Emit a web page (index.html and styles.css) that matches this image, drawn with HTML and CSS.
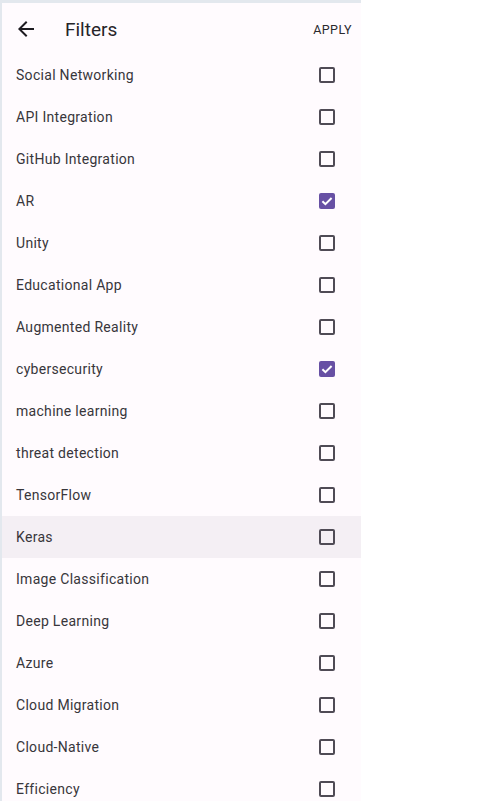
FILE: index.html
```html
<!DOCTYPE html>
<html>
<head>
<meta charset="utf-8">
<link rel="stylesheet" href="styles.css">
</head>
<body>
<div class="panel">
  <header class="bar">
    <span class="back">
      <svg width="24" height="24" viewBox="0 0 24 24"><path d="M20 11H7.83l5.59-5.59L12 4l-8 8 8 8 1.41-1.41L7.83 13H20v-2z" fill="#1d1b20"/></svg>
    </span>
    <span class="title">Filters</span>
    <span class="apply">APPLY</span>
  </header>
  <ul class="list">
    <li class="row"><span class="label">Social Networking</span><span class="box"></span></li>
    <li class="row"><span class="label">API Integration</span><span class="box"></span></li>
    <li class="row"><span class="label">GitHub Integration</span><span class="box"></span></li>
    <li class="row"><span class="label">AR</span><span class="box checked"><svg width="16" height="16" viewBox="0 0 16 16"><path d="M3.4 8.2l3 3L12.6 5" fill="none" stroke="#fff" stroke-width="2"/></svg></span></li>
    <li class="row"><span class="label">Unity</span><span class="box"></span></li>
    <li class="row"><span class="label">Educational App</span><span class="box"></span></li>
    <li class="row"><span class="label">Augmented Reality</span><span class="box"></span></li>
    <li class="row"><span class="label">cybersecurity</span><span class="box checked"><svg width="16" height="16" viewBox="0 0 16 16"><path d="M3.4 8.2l3 3L12.6 5" fill="none" stroke="#fff" stroke-width="2"/></svg></span></li>
    <li class="row"><span class="label">machine learning</span><span class="box"></span></li>
    <li class="row"><span class="label">threat detection</span><span class="box"></span></li>
    <li class="row"><span class="label">TensorFlow</span><span class="box"></span></li>
    <li class="row hover"><span class="label">Keras</span><span class="box"></span></li>
    <li class="row"><span class="label">Image Classification</span><span class="box"></span></li>
    <li class="row"><span class="label">Deep Learning</span><span class="box"></span></li>
    <li class="row"><span class="label">Azure</span><span class="box"></span></li>
    <li class="row"><span class="label">Cloud Migration</span><span class="box"></span></li>
    <li class="row"><span class="label">Cloud-Native</span><span class="box"></span></li>
    <li class="row"><span class="label">Efficiency</span><span class="box"></span></li>
  </ul>
</div>
</body>
</html>
```
FILE: styles.css
```css
html, body {
  margin: 0;
  padding: 0;
  background: #ffffff;
  height: 801px;
  overflow: hidden;
}
.panel {
  width: 359px;
  height: 798px;
  background: #fffbfe;
  border-top: 3px solid #e3e8ee;
  border-left: 2px solid #e3e8ee;
  font-family: Roboto, "Noto Sans", sans-serif;
  color: #1d1b20;
}
.bar {
  height: 52px;
  display: flex;
  align-items: center;
  padding: 0 9px 0 12px;
}
.back {
  width: 24px;
  height: 24px;
  display: flex;
  margin-right: 27px;
}
.title {
  flex: 1;
  font-size: 19px;
  font-weight: 400;
  color: #262429;
}
.apply {
  font-size: 12.5px;
  font-weight: 400;
  letter-spacing: 0.4px;
  color: #2b2a2e;
}
.list {
  list-style: none;
  margin: 0;
  padding: 0;
  margin-top: -1px;
}
.row {
  height: 42px;
  display: flex;
  align-items: center;
  justify-content: space-between;
  padding: 0 26px 0 14px;
}
.row.hover {
  background: #f4eff4;
}
.label {
  font-size: 14px;
  letter-spacing: 0.3px;
  color: #38363b;
}
.box {
  width: 16px;
  height: 16px;
  box-sizing: border-box;
  border: 2px solid #4f4b55;
  border-radius: 2px;
  display: flex;
}
.box.checked {
  background: #6750a4;
  border: none;
  align-items: center;
  justify-content: center;
}
.box.checked svg {
  flex: none;
}
```
